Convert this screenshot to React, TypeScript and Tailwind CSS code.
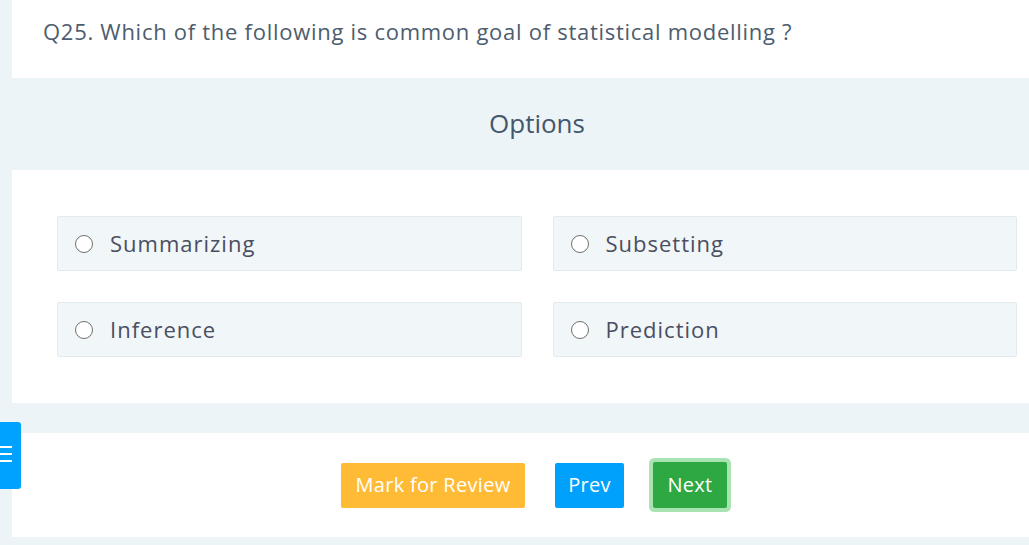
const options = ['Summarizing', 'Subsetting', 'Inference', 'Prediction'];

function Radio() {
  return <span className="w-[18px] h-[18px] rounded-full border-[1.5px] border-[#6f6f6f] bg-white shrink-0" />;
}

export default function App() {
  return (
    <div className="relative w-[1029px] h-[545px] overflow-hidden bg-[#edf4f8] font-['Open_Sans',sans-serif]">
      <div className="ml-[12px] w-[1050px]">
        {/* question */}
        <div className="bg-white h-[78px] pl-[31px] pt-[15px]">
          <h1 className="text-[22px] leading-[32px] text-[#4d5d6e] tracking-[0.72px]">
            Q25. Which of the following is common goal of statistical modelling ?
          </h1>
        </div>

        {/* options header */}
        <div className="h-[92px] flex items-center justify-center">
          <h2 className="text-[26px] text-[#43576b] pb-[2px]">Options</h2>
        </div>

        {/* options grid */}
        <div className="bg-white h-[233px] px-[45px] pt-[46px]">
          <div className="grid grid-cols-2 gap-x-[31px] gap-y-[31px]">
            {options.map((opt) => (
              <label
                key={opt}
                className="h-[55px] flex items-center gap-[17px] pl-[17px] rounded-[2px] border border-[#e2eaee] bg-[#f1f6f8] cursor-pointer"
              >
                <Radio />
                <span className="text-[22px] text-[#4a4e62] tracking-[1px] pb-[1px]">{opt}</span>
              </label>
            ))}
          </div>
        </div>

        <div className="h-[30px]" />

        {/* actions */}
        <div className="bg-white h-[104px] flex items-center justify-center pr-[6px]">
          <div className="flex items-center tracking-[0.3px]">
            <button className="h-[45px] w-[184px] bg-[#ffbb35] text-white text-[20px] rounded-[2px]">Mark for Review</button>
            <button className="h-[45px] w-[69px] ml-[30px] bg-[#00a0fd] text-white text-[20px] rounded-[2px]">Prev</button>
            <button className="h-[46px] w-[74px] ml-[29px] bg-[#2ea843] text-white text-[20px] rounded-[2px] ring-4 ring-[#a8e3b1]">Next</button>
          </div>
        </div>
      </div>

      {/* side menu tab */}
      <button className="absolute left-0 top-[422px] w-[21px] h-[67px] bg-[#00a2ff] rounded-r-[3px] flex flex-col justify-center gap-[5px] pb-[3px]">
        <span className="block w-[12px] h-[2px] bg-white" />
        <span className="block w-[12px] h-[2px] bg-white" />
        <span className="block w-[12px] h-[2px] bg-white" />
      </button>
    </div>
  );
}
